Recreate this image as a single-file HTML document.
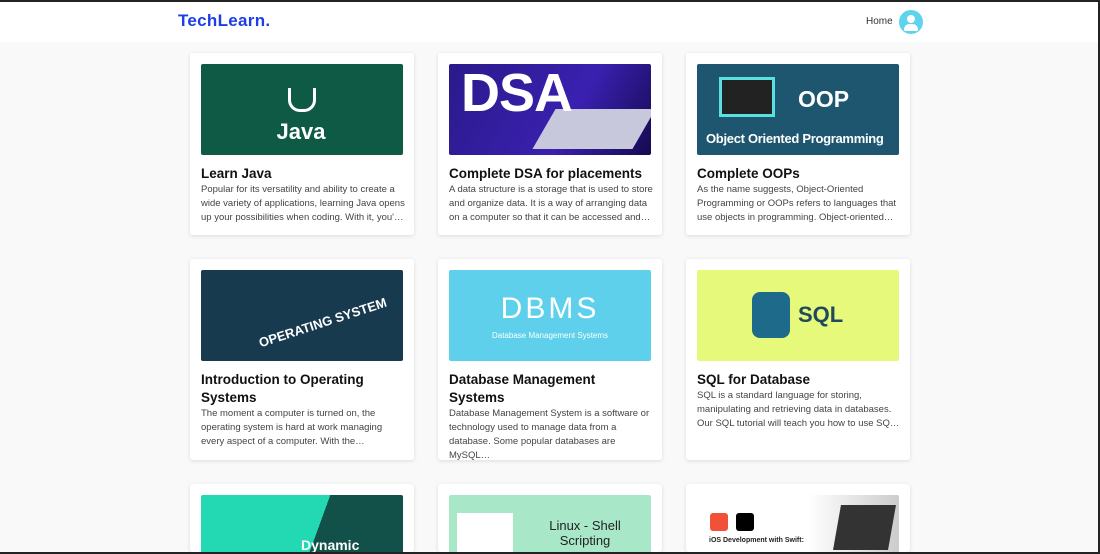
<!DOCTYPE html>
<html><head><style>
*{box-sizing:border-box;margin:0;padding:0}
html,body{width:1100px;height:554px;overflow:hidden}
body{background:#f9f9f9;font-family:"Liberation Sans",sans-serif;position:relative}
.ln{position:absolute;background:#222;z-index:5}
.hdr{position:absolute;left:0;top:0;width:1100px;height:42px;background:#fff}
.logo{position:absolute;left:178px;top:11px;font-size:17px;font-weight:bold;color:#1d3ee6;letter-spacing:.3px}
.home{position:absolute;left:866px;top:16px;font-size:10px;color:#333}
.av{position:absolute;left:899px;top:10px;width:24px;height:24px;border-radius:50%;background:#5dd3ee;overflow:hidden}
.av:before{content:"";position:absolute;left:8px;top:5px;width:8px;height:8px;border-radius:50%;background:#fff}
.av:after{content:"";position:absolute;left:5px;top:14px;width:14px;height:7px;border-radius:7px 7px 2px 2px;background:#fff}
.card{position:absolute;width:224px;background:#fff;box-shadow:0 1px 4px rgba(0,0,0,.12);border-radius:3px;overflow:hidden}
.img{position:absolute;left:11px;top:11px;width:202px;height:91px;border-radius:2px;overflow:hidden;color:#fff;font-weight:bold;white-space:nowrap}
.t{position:absolute;left:11px;top:111px;width:205px;font-size:13.5px;font-weight:bold;color:#111;line-height:18px}
.d{position:absolute;left:11px;width:205px;font-size:9.5px;color:#444;line-height:14px}
</style></head><body>
<div class="hdr"></div>
<div class="ln" style="left:0;top:0;width:1100px;height:2px"></div>
<div class="ln" style="right:0;top:0;width:2px;height:554px"></div>
<div class="ln" style="left:0;bottom:0;width:1100px;height:2px"></div>
<div class="logo">TechLearn.</div>
<div class="home">Home</div>
<div class="av"></div>

<div class="card" style="left:190px;top:53px;height:182px">
<div class="img" style="background:#0f5a45"><div style="position:absolute;left:100px;top:55px;font-size:22px;transform:translateX(-50%)">Java</div><div style="position:absolute;left:87px;top:24px;width:28px;height:24px;border:3px solid #fff;border-top:none;border-radius:0 0 12px 12px"></div></div>
<div class="t" style="top:112px">Learn Java</div>
<div class="d" style="top:130px">Popular for its versatility and ability to create a wide variety of applications, learning Java opens up your possibilities when coding. With it, you'…</div>
</div>
<div class="card" style="left:438px;top:53px;height:182px">
<div class="img" style="background:linear-gradient(120deg,#2a1a8a,#3a20b0 60%,#150a50)"><div style="position:absolute;left:95px;top:45px;width:100px;height:40px;background:#c8c8dd;transform:skewX(-30deg)"></div><div style="position:absolute;left:12px;top:-2px;font-size:54px;letter-spacing:-1px">DSA</div></div>
<div class="t" style="top:112px">Complete DSA for placements</div>
<div class="d" style="top:130px">A data structure is a storage that is used to store and organize data. It is a way of arranging data on a computer so that it can be accessed and…</div>
</div>
<div class="card" style="left:686px;top:53px;height:182px">
<div class="img" style="background:#1d566e"><div style="position:absolute;left:22px;top:13px;width:56px;height:40px;border:3px solid #59e0e0;background:#222"></div><div style="position:absolute;left:101px;top:22px;font-size:23px">OOP</div><div style="position:absolute;left:9px;top:67px;font-size:13px;letter-spacing:-.3px">Object Oriented Programming</div></div>
<div class="t" style="top:112px">Complete OOPs</div>
<div class="d" style="top:130px">As the name suggests, Object-Oriented Programming or OOPs refers to languages that use objects in programming. Object-oriented…</div>
</div>

<div class="card" style="left:190px;top:259px;height:201px">
<div class="img" style="background:#173a4e"><div style="position:absolute;left:55px;top:45px;font-size:13px;transform:rotate(-18deg)">OPERATING SYSTEM</div></div>
<div class="t" style="top:112px">Introduction to Operating Systems</div>
<div class="d" style="top:148px">The moment a computer is turned on, the operating system is hard at work managing every aspect of a computer. With the…</div>
</div>
<div class="card" style="left:438px;top:259px;height:201px">
<div class="img" style="background:#5ed0eb"><div style="position:absolute;left:0;width:202px;text-align:center;top:22px;font-size:30px;font-weight:normal;letter-spacing:3px">DBMS</div><div style="position:absolute;left:0;width:202px;text-align:center;top:61px;font-size:8px;font-weight:normal">Database Management Systems</div></div>
<div class="t" style="top:112px">Database Management Systems</div>
<div class="d" style="top:148px">Database Management System is a software or technology used to manage data from a database. Some popular databases are MySQL…</div>
</div>
<div class="card" style="left:686px;top:259px;height:201px">
<div class="img" style="background:#e6f97a"><div style="position:absolute;left:55px;top:22px;width:38px;height:46px;border-radius:8px;background:#1e6a8a"></div><div style="position:absolute;left:101px;top:32px;font-size:22px;color:#1f4a5e">SQL</div></div>
<div class="t" style="top:112px">SQL for Database</div>
<div class="d" style="top:130px">SQL is a standard language for storing, manipulating and retrieving data in databases. Our SQL tutorial will teach you how to use SQ…</div>
</div>

<div class="card" style="left:190px;top:484px;height:68px">
<div class="img" style="background:linear-gradient(110deg,#22d9b4 55%,#12514a 55%)"><div style="position:absolute;left:100px;top:42px;font-size:14px">Dynamic</div></div>
</div>
<div class="card" style="left:438px;top:484px;height:68px">
<div class="img" style="background:#a8e8c8"><div style="position:absolute;left:8px;top:18px;width:56px;height:50px;background:#fff"></div><div style="position:absolute;left:96px;top:23px;width:80px;text-align:center;font-size:13px;color:#222;font-weight:normal;line-height:15px;white-space:normal">Linux - Shell Scripting</div></div>
</div>
<div class="card" style="left:686px;top:484px;height:68px">
<div class="img" style="background:linear-gradient(90deg,#fff 55%,#ccc)"><div style="position:absolute;left:13px;top:18px;width:18px;height:18px;background:#f05138;border-radius:3px"></div><div style="position:absolute;left:39px;top:18px;width:18px;height:18px;background:#000;border-radius:3px"></div><div style="position:absolute;left:12px;top:42px;font-size:7px;color:#222">iOS Development with Swift:</div><div style="position:absolute;left:140px;top:10px;width:55px;height:45px;background:#333;transform:skewX(-10deg)"></div></div>
</div>
</body></html>
